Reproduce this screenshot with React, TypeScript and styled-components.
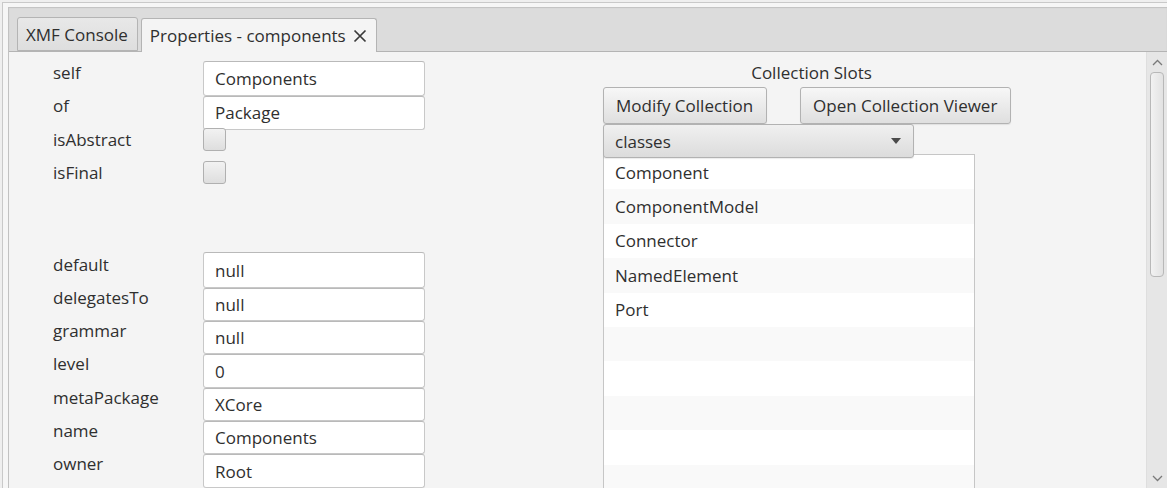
import React from 'react'
import styled, { createGlobalStyle } from 'styled-components'

const GlobalStyle = createGlobalStyle`
  html, body {
    margin: 0;
    padding: 0;
    background: #f0f0f0;
  }
  body {
    font-family: "Open Sans", "Noto Sans", "Liberation Sans", sans-serif;
    font-size: 17px;
    color: #2f2f2f;
  }
`

const Frame = styled.div`
  width: 1167px;
  height: 488px;
  overflow: hidden;
  box-sizing: border-box;
  background: #efefef;
  padding: 2px 0 0 2px;
  display: flex;
`

const Shell = styled.div`
  flex: 1;
  display: flex;
  min-width: 0;
  border-top: 1px solid #c9c9c9;
  border-left: 1px solid #c9c9c9;
  background: #f6f6f6;
  padding: 4px 0 0 5px;
`

const TabPane = styled.div`
  flex: 1;
  min-width: 0;
  display: flex;
  flex-direction: column;
  border-left: 1px solid #c2c2c2;
`

const TabHeader = styled.div`
  height: 44px;
  flex-shrink: 0;
  display: flex;
  align-items: flex-end;
  gap: 3px;
  padding-left: 8px;
  background: #dcdcdc;
  box-shadow: inset 0 1px 1px rgba(0, 0, 0, 0.12);
  border-bottom: 1px solid #b4b4b4;
`

const Tab = styled.div<{ $selected?: boolean }>`
  height: 34px;
  box-sizing: border-box;
  margin-bottom: ${p => (p.$selected ? '-1px' : '0')};
  padding: 0 9px 0 8px;
  display: flex;
  align-items: center;
  gap: 7px;
  border: 1px solid #b4b4b4;
  border-bottom: ${p => (p.$selected ? 'none' : '1px solid #b4b4b4')};
  border-radius: 3px 3px 0 0;
  background: ${p =>
    p.$selected ? '#f4f4f4' : 'linear-gradient(#e8e8e8, #dedede)'};
  white-space: nowrap;
`

const CloseIcon = () => (
  <svg width="14" height="14" viewBox="0 0 14 14">
    <path d="M1.5 1.5 L12.5 12.5 M12.5 1.5 L1.5 12.5" stroke="#3a3a3a" strokeWidth="1.7" />
  </svg>
)

const Body = styled.div`
  flex: 1;
  min-height: 0;
  display: flex;
  background: #f4f4f4;
  overflow: hidden;
`

const Content = styled.div`
  flex: 1;
  min-width: 0;
  display: flex;
  align-items: flex-start;
  padding: 11px 0 0 44px;
`

const Form = styled.div`
  display: flex;
  flex-direction: column;
  width: 372px;
  flex-shrink: 0;
`

const Row = styled.div`
  display: flex;
  height: 33.3px;
`

const Spacer = styled.div`
  height: 58.4px;
`

const Label = styled.div`
  width: 150px;
  flex-shrink: 0;
  line-height: 20px;
`

const TextField = styled.div<{ $first?: boolean }>`
  width: 222px;
  box-sizing: border-box;
  margin-top: ${p => (p.$first ? '-2.4px' : '0')};
  height: ${p => (p.$first ? '35.7px' : '33.3px')};
  display: flex;
  align-items: center;
  padding: 0 11px;
  background: #ffffff;
  border: 1px solid #c8c8c8;
  border-top-color: #b9b9b9;
  border-radius: 3px;
`

const CheckBox = styled.div`
  width: 23px;
  height: 23px;
  box-sizing: border-box;
  margin-top: -2px;
  border: 1px solid #b0b0b0;
  border-radius: 3px;
  background: linear-gradient(#f2f2f2, #dedede);
`

const SlotsPanel = styled.div`
  margin-left: 178px;
  width: 417px;
  display: flex;
  flex-direction: column;
  align-items: flex-start;
`

const Title = styled.div`
  align-self: stretch;
  text-align: center;
  line-height: 20px;
  margin-bottom: 4px;
`

const ButtonRow = styled.div`
  display: flex;
  gap: 33px;
`

const Button = styled.div`
  height: 37px;
  box-sizing: border-box;
  padding: 0 13px 0 12px;
  display: flex;
  align-items: center;
  border: 1px solid #b2b2b2;
  border-radius: 3px;
  background: linear-gradient(#f7f7f7, #dfdfdf);
  box-shadow: 0 1px 1px rgba(0, 0, 0, 0.08);
  white-space: nowrap;
`

const Combo = styled.div`
  position: relative;
  z-index: 1;
  width: 311px;
  height: 34px;
  box-sizing: border-box;
  padding: 0 12px 0 11px;
  display: flex;
  align-items: center;
  justify-content: space-between;
  border: 1px solid #b2b2b2;
  border-radius: 3px;
  background: linear-gradient(#f0f0f0, #dcdcdc);
  box-shadow: 0 1px 1px rgba(0, 0, 0, 0.08);
`

const ComboArrow = () => (
  <svg width="10" height="6" viewBox="0 0 10 6">
    <path d="M0 0 L10 0 L5 6 Z" fill="#4a4a4a" />
  </svg>
)

const List = styled.div`
  margin-top: -4px;
  width: 372px;
  box-sizing: border-box;
  border: 1px solid #c6c6c6;
  background: #ffffff;
`

const ListItem = styled.div<{ $odd: boolean }>`
  height: 34.4px;
  display: flex;
  align-items: center;
  padding-left: 11px;
  background: ${p => (p.$odd ? '#f9f9f9' : '#ffffff')};
`

const ScrollBar = styled.div`
  width: 20px;
  flex-shrink: 0;
  display: flex;
  flex-direction: column;
  align-items: center;
  background: #e6e6e6;
  border-left: 1px solid #dedede;
`

const ArrowBox = styled.div`
  height: 20px;
  display: flex;
  align-items: center;
  justify-content: center;
`

const Thumb = styled.div`
  width: 14px;
  height: 205px;
  box-sizing: border-box;
  border: 1px solid #b8b8b8;
  border-radius: 4px;
  background: linear-gradient(90deg, #f2f2f2, #e2e2e2);
`

const Track = styled.div`
  flex: 1;
`

const Chevron = ({ up }: { up?: boolean }) => (
  <svg width="11" height="7" viewBox="0 0 11 7">
    <path
      d={up ? 'M1 6 L5.5 1.5 L10 6' : 'M1 1 L5.5 5.5 L10 1'}
      fill="none"
      stroke="#7a7a7a"
      strokeWidth="1.3"
    />
  </svg>
)

const topFields = [
  { label: 'self', value: 'Components' },
  { label: 'of', value: 'Package' },
]

const bottomFields = [
  { label: 'default', value: 'null' },
  { label: 'delegatesTo', value: 'null' },
  { label: 'grammar', value: 'null' },
  { label: 'level', value: '0' },
  { label: 'metaPackage', value: 'XCore' },
  { label: 'name', value: 'Components' },
  { label: 'owner', value: 'Root' },
]

const classes = ['Component', 'ComponentModel', 'Connector', 'NamedElement', 'Port', '', '', '', '', '']

export default function App() {
  return (
    <>
      <GlobalStyle />
      <Frame>
        <Shell>
          <TabPane>
            <TabHeader>
              <Tab>XMF Console</Tab>
              <Tab $selected>
                Properties - components
                <CloseIcon />
              </Tab>
            </TabHeader>
            <Body>
              <Content>
                <Form>
                  {topFields.map((f, i) => (
                    <Row key={f.label}>
                      <Label>{f.label}</Label>
                      <TextField $first={i === 0}>{f.value}</TextField>
                    </Row>
                  ))}
                  <Row>
                    <Label>isAbstract</Label>
                    <CheckBox />
                  </Row>
                  <Row>
                    <Label>isFinal</Label>
                    <CheckBox />
                  </Row>
                  <Spacer />
                  {bottomFields.map((f, i) => (
                    <Row key={f.label}>
                      <Label>{f.label}</Label>
                      <TextField $first={i === 0}>{f.value}</TextField>
                    </Row>
                  ))}
                </Form>
                <SlotsPanel>
                  <Title>Collection Slots</Title>
                  <ButtonRow>
                    <Button>Modify Collection</Button>
                    <Button>Open Collection Viewer</Button>
                  </ButtonRow>
                  <Combo>
                    classes
                    <ComboArrow />
                  </Combo>
                  <List>
                    {classes.map((c, i) => (
                      <ListItem key={i} $odd={i % 2 === 1}>
                        {c}
                      </ListItem>
                    ))}
                  </List>
                </SlotsPanel>
              </Content>
              <ScrollBar>
                <ArrowBox>
                  <Chevron up />
                </ArrowBox>
                <Thumb />
                <Track />
                <ArrowBox>
                  <Chevron />
                </ArrowBox>
              </ScrollBar>
            </Body>
          </TabPane>
        </Shell>
      </Frame>
    </>
  )
}
